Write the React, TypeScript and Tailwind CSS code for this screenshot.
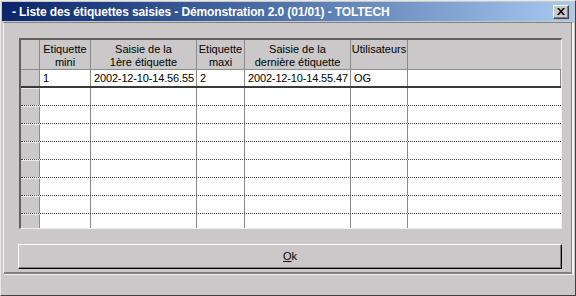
import React from "react";

const cols = [51, 106, 48, 106, 57];

function HeaderCell({ w, lines, last }: { w?: number; lines: string[]; last?: boolean }) {
  return (
    <div
      className={`h-full border-r border-[#8a8a8a] flex flex-col items-center pt-[3px] leading-[13px] text-[11px] text-black ${last ? "flex-1" : ""}`}
      style={w ? { width: w } : undefined}
    >
      {lines.map((l, i) => (
        <span key={i} className="whitespace-nowrap">{l}</span>
      ))}
    </div>
  );
}

function DataCell({ w, text }: { w?: number; text?: string }) {
  return (
    <div
      className={`h-full border-r border-[#8a8a8a] pl-[3px] flex items-center text-[11px] text-black whitespace-nowrap overflow-hidden tracking-[-0.15px] ${w ? "" : "flex-1"}`}
      style={w ? { width: w } : undefined}
    >
      {text}
    </div>
  );
}

function RowHead() {
  return (
    <div className="w-[19px] h-full bg-[#cac8c8] border-t border-[#ececec] border-r border-r-[#8a8a8a] shrink-0" />
  );
}

export default function App() {
  return (
    <div
      className="w-[576px] h-[296px] bg-[#cac8c8] flex flex-col border-r border-b border-r-[#404040] border-b-[#404040] border-l border-t border-l-[#e8e8e8] border-t-[#e8e8e8] overflow-hidden"
      style={{ fontFamily: '"Liberation Sans", Arial, sans-serif' }}
    >
      {/* Title bar */}
      <div className="h-[19px] mx-[1px] mt-[1px] flex items-center bg-gradient-to-r from-[#0a246a] to-[#a6caf0] shrink-0">
        <span className="ml-[10px] text-white font-bold text-[12px] whitespace-nowrap tracking-[-0.12px]">
          - Liste des étiquettes saisies - Démonstration 2.0 (01/01) - TOLTECH
        </span>
        <div className="ml-auto mr-[5px] w-[16px] h-[14px] bg-[#cac8c8] border-t border-l border-t-white border-l-white border-r border-b border-r-[#404040] border-b-[#404040] flex items-center justify-center shadow-[inset_-1px_-1px_0_#808080]">
          <svg width="8" height="7" viewBox="0 0 8 7">
            <path d="M0 0h2l2 2.5L6 0h2L5 3.5 8 7H6L4 4.5 2 7H0l3-3.5z" fill="#000" />
          </svg>
        </div>
      </div>

      {/* Main panel */}
      <div className="mx-[2px] mt-[1px] h-[252px] border border-t-[#808080] border-l-[#f4f4f4] border-r-[#f4f4f4] border-b-[#808080] shadow-[inset_-1px_-1px_0_#808080,1px_1px_0_#f4f4f4] pl-[15px] pr-[9px] pt-[15px] flex flex-col shrink-0">
        {/* Grid */}
        <div className="w-[543px] h-[191px] border-t-2 border-l-2 border-t-[#606060] border-l-[#606060] border-r border-b border-r-[#f0f0f0] border-b-[#f0f0f0] bg-white overflow-hidden flex flex-col">
          {/* Header */}
          <div className="h-[30px] flex bg-[#cac8c8] border-b border-[#8a8a8a] shrink-0">
            <div className="w-[19px] h-full border-r border-[#8a8a8a]" />
            <HeaderCell w={cols[0]} lines={["Etiquette", "mini"]} />
            <HeaderCell w={cols[1]} lines={["Saisie de la", "1ère étiquette"]} />
            <HeaderCell w={cols[2]} lines={["Etiquette", "maxi"]} />
            <HeaderCell w={cols[3]} lines={["Saisie de la", "dernière étiquette"]} />
            <HeaderCell w={cols[4]} lines={["Utilisateurs"]} />
            <div className="flex-1 h-full" />
          </div>
          {/* Data row */}
          <div className="h-[18px] flex border-b-2 border-[#3a3a3a] shrink-0">
            <div className="w-[19px] h-full bg-[#cac8c8] border-r border-[#8a8a8a]" />
            <DataCell w={cols[0]} text="1" />
            <DataCell w={cols[1]} text="2002-12-10-14.56.55" />
            <DataCell w={cols[2]} text="2" />
            <DataCell w={cols[3]} text="2002-12-10-14.55.47" />
            <DataCell w={cols[4]} text="OG" />
            <DataCell />
          </div>
          {/* Empty rows */}
          {Array.from({ length: 8 }).map((_, i) => (
            <div key={i} className="h-[18px] flex border-b border-dotted border-[#404040] shrink-0">
              <RowHead />
              {cols.map((w, j) => (
                <div key={j} className="h-full border-r border-[#8a8a8a]" style={{ width: w }} />
              ))}
              <div className="flex-1 h-full" />
            </div>
          ))}
        </div>

        {/* Button */}
        <div className="mt-[15px] -ml-[1px] w-[544px] h-[25px] bg-[#cac8c8] border-t border-l border-t-white border-l-white border-r border-b border-r-black border-b-black shadow-[inset_-1px_-1px_0_#808080] flex items-center justify-center text-[11px] text-black">
          <span><span className="underline">O</span>k</span>
        </div>
      </div>

      {/* Bottom strip */}
      <div className="flex-1" />
    </div>
  );
}
